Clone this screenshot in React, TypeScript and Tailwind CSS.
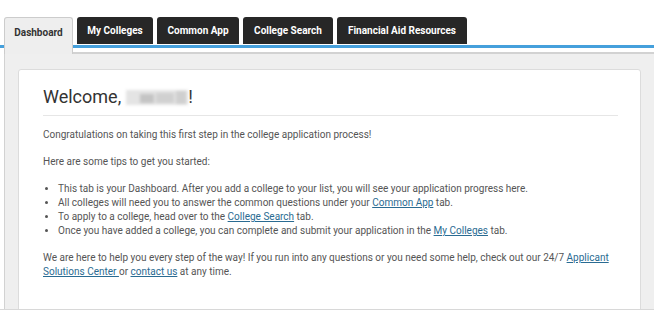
import React from 'react';

const tabs = [
  { label: 'My Colleges', width: 'w-[76px]' },
  { label: 'Common App', width: 'w-[82px]' },
  { label: 'College Search', width: 'w-[90px]' },
  { label: 'Financial Aid Resources', width: 'w-[130px]' },
];

const Link: React.FC<{ children: React.ReactNode }> = ({ children }) => (
  <a className="text-[#2a6b92] underline underline-offset-[1px] cursor-pointer">{children}</a>
);

export default function App() {
  return (
    <div className="w-[654px] h-[311px] overflow-hidden bg-white font-['Roboto',sans-serif]">
      <div className="pt-[17px]">
        {/* tab bar */}
        <div className="flex items-start gap-[4px] pl-[4px] h-[31px] border-b-[3px] border-[#45a0dc]">
          <div className="relative z-10 w-[69px] h-[37px] bg-[#eeeeee] border-l border-t border-r border-[#cccccc] rounded-t-[3px] text-[10px] font-bold text-[#333] flex justify-center pt-[7px]">
            Dashboard
          </div>
          {tabs.map((tab) => (
            <div
              key={tab.label}
              className={`${tab.width} h-[27px] bg-[#272727] rounded-t-[3px] text-[10px] font-bold text-white flex items-center justify-center`}
            >
              {tab.label}
            </div>
          ))}
        </div>

        {/* panel */}
        <div className="mt-[4px] ml-[4px] h-[257px] overflow-hidden bg-[#efefef] border-l border-t-2 border-[#d2d2d2] pl-[13px] pr-[13px] pt-[15px]">
          <div className="h-[300px] bg-white border border-[#dcdcdc] rounded-[3px] pl-[24px] pr-[22px] pt-[17px] text-[#555] text-[10px] leading-[14px]">
            <h1 className="text-[18px] leading-[20px] text-[#333] flex items-center">
              Welcome,
              <span className="inline-block ml-[5px] w-[62px] h-[15px] relative blur-[1.5px] bg-[#e4e4e4]">
                <span className="absolute left-[14px] top-[4px] w-[14px] h-[9px] bg-[#c4c4c4]" />
                <span className="absolute left-[30px] top-[3px] w-[18px] h-[10px] bg-[#d0d0d0]" />
                <span className="absolute left-[50px] top-[1px] w-[10px] h-[13px] bg-[#cfcfcf]" />
              </span>
              !
            </h1>
            <hr className="mt-[8px] border-t border-[#e6e6e6]" />
            <p className="mt-[12px] mb-[13px]">
              Congratulations on taking this first step in the college application process!
            </p>
            <p className="mb-[13px]">Here are some tips to get you started:</p>
            <ul className="list-disc pl-[15px] mb-[13px]">
              <li>
                This tab is your Dashboard. After you add a college to your list, you will see your
                application progress here.
              </li>
              <li>
                All colleges will need you to answer the common questions under your{' '}
                <Link>Common App</Link> tab.
              </li>
              <li>
                To apply to a college, head over to the <Link>College Search</Link> tab.
              </li>
              <li>
                Once you have added a college, you can complete and submit your application in the{' '}
                <Link>My Colleges</Link> tab.
              </li>
            </ul>
            <p>
              We are here to help you every step of the way! If you run into any questions or you
              need some help, check out our 24/7 <Link>Applicant Solutions Center </Link> or{' '}
              <Link>contact us</Link> at any time.
            </p>
          </div>
        </div>
        <div className="border-t border-[#d8d8d8]" />
      </div>
    </div>
  );
}
